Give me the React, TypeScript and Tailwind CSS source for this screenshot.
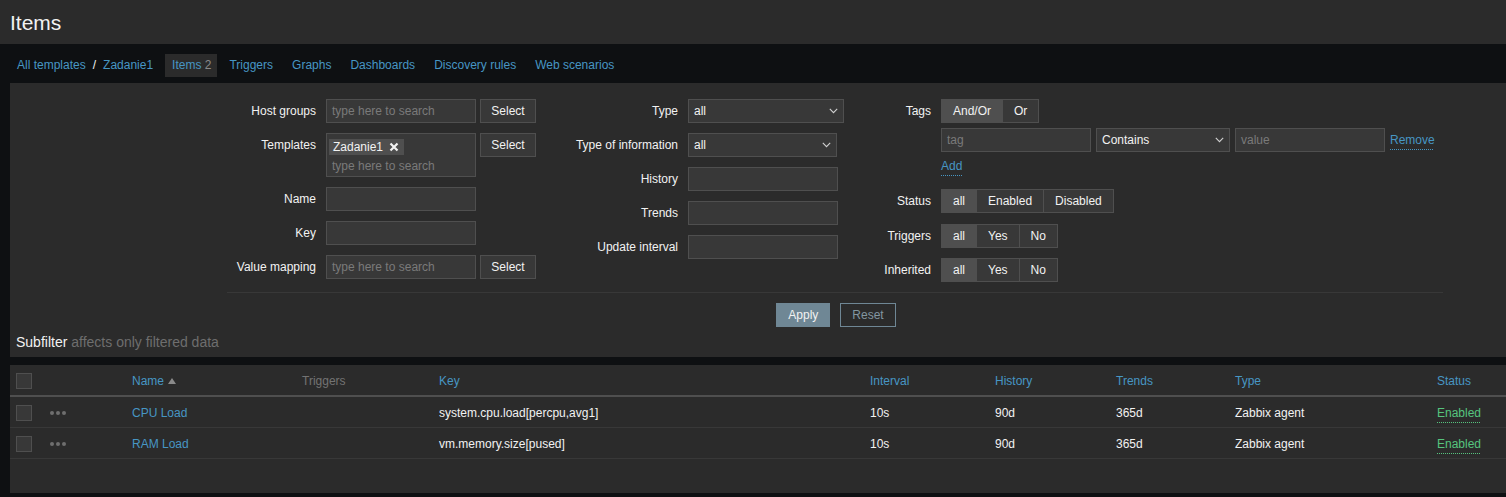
import React from "react";

function Chevron() {
  return (
    <svg width="9" height="6" viewBox="0 0 9 6" className="shrink-0">
      <path d="M0.8 0.8 L4.5 4.6 L8.2 0.8" fill="none" stroke="#d0d0d0" strokeWidth="1.1" />
    </svg>
  );
}

function Dots() {
  return (
    <svg width="18" height="6" viewBox="0 0 18 6">
      <circle cx="3" cy="3" r="2" fill="#6e6e6e" />
      <circle cx="9" cy="3" r="2" fill="#6e6e6e" />
      <circle cx="15" cy="3" r="2" fill="#6e6e6e" />
    </svg>
  );
}

function Input({ w, placeholder }: { w: string; placeholder?: string }) {
  return (
    <div className={`${w} h-[24px] bg-[#383838] border border-[#4f4f4f] px-[5px] leading-[22px] text-[#7a7a7a] whitespace-nowrap overflow-hidden`}>
      {placeholder || ""}
    </div>
  );
}

function SelectBox({ w, value }: { w: string; value: string }) {
  return (
    <div className={`${w} h-[24px] bg-[#383838] border border-[#4f4f4f] pl-[5px] pr-[5px] flex items-center justify-between text-[#f2f2f2]`}>
      <span>{value}</span>
      <Chevron />
    </div>
  );
}

function Btn({ children }: { children: React.ReactNode }) {
  return (
    <div className="w-[56px] h-[24px] bg-[#383838] border border-[#4f4f4f] flex items-center justify-center text-[#f2f2f2]">
      {children}
    </div>
  );
}

function Seg({ items }: { items: string[] }) {
  return (
    <div className="flex h-[24px]">
      {items.map((t, i) => (
        <div
          key={t}
          className={
            i === 0
              ? "flex items-center px-[11px] border border-[#4f4f4f] bg-[#4f4f4f] text-[#f2f2f2]"
              : "flex items-center px-[11px] border border-[#4f4f4f] -ml-px bg-[#383838] text-[#f2f2f2]"
          }
        >
          {t}
        </div>
      ))}
    </div>
  );
}

function Label1({ children }: { children: React.ReactNode }) {
  return <div className="w-[89px] h-[24px] leading-[24px] text-right text-[#f2f2f2] shrink-0">{children}</div>;
}
function Label2({ children }: { children: React.ReactNode }) {
  return <div className="w-[122px] h-[24px] leading-[24px] text-right text-[#f2f2f2] shrink-0">{children}</div>;
}
function Label3({ children }: { children: React.ReactNode }) {
  return <div className="w-[87px] h-[24px] leading-[24px] text-right text-[#f2f2f2] shrink-0">{children}</div>;
}

const cols =
  "grid grid-cols-[34px_83px_170px_137px_431px_125px_121px_119px_202px_1fr] items-center";

function Row({ name, keyText }: { name: string; keyText: string }) {
  return (
    <div className={`${cols} h-[31px] pt-[2px] border-b border-[#383838] text-[#f2f2f2]`}>
      <div className="pl-[6px]">
        <div className="w-[16px] h-[16px] bg-[#383838] border border-[#4f4f4f]" />
      </div>
      <div className="pl-[5px] flex items-center">
        <Dots />
      </div>
      <div className="px-[5px] text-[#4796c4]">{name}</div>
      <div className="px-[5px]" />
      <div className="px-[5px]">{keyText}</div>
      <div className="px-[5px]">10s</div>
      <div className="px-[5px]">90d</div>
      <div className="px-[5px]">365d</div>
      <div className="px-[5px]">Zabbix agent</div>
      <div className="px-[5px]">
        <span className="text-[#56c47e] underline decoration-dotted underline-offset-[5px]">Enabled</span>
      </div>
    </div>
  );
}

export default function App() {
  return (
    <div className="min-h-screen bg-[#0e1012] font-['Liberation_Sans',Arial,sans-serif] text-[12px] text-[#f2f2f2]">
      {/* Header */}
      <div className="h-[44px] bg-[#2b2b2b] flex items-center pl-[10px]">
        <h1 className="text-[21px] leading-[21px] text-[#f2f2f2]">Items</h1>
      </div>

      {/* Nav */}
      <div className="flex pt-[10px] pb-[6px] pl-[17px] h-[39px]">
        <div className="flex h-[23px] leading-[23px]">
          <span className="text-[#4796c4]">All templates</span>
          <span className="mx-[7px] text-[#f2f2f2]">/</span>
          <span className="text-[#4796c4]">Zadanie1</span>
        </div>
        <div className="flex h-[23px] leading-[23px] ml-[12px] gap-[5px]">
          <div className="pl-[7px] pr-[6px] bg-[#2b2b2b]">
            <span className="text-[#4796c4]">Items</span> <span className="text-[#8a8a8a]">2</span>
          </div>
          <div className="px-[7px] text-[#4796c4]">Triggers</div>
          <div className="px-[7px] text-[#4796c4]">Graphs</div>
          <div className="px-[7px] text-[#4796c4]">Dashboards</div>
          <div className="px-[7px] text-[#4796c4]">Discovery rules</div>
          <div className="px-[7px] text-[#4796c4]">Web scenarios</div>
        </div>
      </div>

      {/* Filter */}
      <div className="ml-[10px] bg-[#2b2b2b] pt-[16px] pb-[7px]">
        <div className="ml-[217px] w-[1216px]">
          <div className="flex">
            {/* col 1 */}
            <div className="w-[329px] flex flex-col gap-[10px]">
              <div className="flex">
                <Label1>Host groups</Label1>
                <div className="ml-[10px]">
                  <Input w="w-[150px]" placeholder="type here to search" />
                </div>
                <div className="ml-[4px]">
                  <Btn>Select</Btn>
                </div>
              </div>
              <div className="flex">
                <Label1>Templates</Label1>
                <div className="ml-[10px] w-[150px] h-[44px] bg-[#383838] border border-[#4f4f4f] flex flex-col items-start">
                  <div className="mt-[5px] ml-[2px] h-[16px] leading-[16px] bg-[#4f4f4f] pl-[4px] pr-[5px] flex items-center text-[#f2f2f2]">
                    <span>Zadanie1</span>
                    <svg width="10" height="10" viewBox="0 0 10 10" className="ml-[6px]">
                      <path d="M1.5 1.5 L8.5 8.5 M8.5 1.5 L1.5 8.5" stroke="#f2f2f2" strokeWidth="2.2" />
                    </svg>
                  </div>
                  <div className="mt-[3px] pl-[5px] leading-[16px] text-[#7a7a7a]">type here to search</div>
                </div>
                <div className="ml-[4px]">
                  <Btn>Select</Btn>
                </div>
              </div>
              <div className="flex">
                <Label1>Name</Label1>
                <div className="ml-[10px]">
                  <Input w="w-[150px]" />
                </div>
              </div>
              <div className="flex">
                <Label1>Key</Label1>
                <div className="ml-[10px]">
                  <Input w="w-[150px]" />
                </div>
              </div>
              <div className="flex">
                <Label1>Value mapping</Label1>
                <div className="ml-[10px]">
                  <Input w="w-[150px]" placeholder="type here to search" />
                </div>
                <div className="ml-[4px]">
                  <Btn>Select</Btn>
                </div>
              </div>
            </div>

            {/* col 2 */}
            <div className="w-[288px] flex flex-col gap-[10px]">
              <div className="flex">
                <Label2>Type</Label2>
                <div className="ml-[10px]">
                  <SelectBox w="w-[156px]" value="all" />
                </div>
              </div>
              <div className="flex">
                <Label2>Type of information</Label2>
                <div className="ml-[10px]">
                  <SelectBox w="w-[149px]" value="all" />
                </div>
              </div>
              <div className="flex">
                <Label2>History</Label2>
                <div className="ml-[10px]">
                  <Input w="w-[150px]" />
                </div>
              </div>
              <div className="flex">
                <Label2>Trends</Label2>
                <div className="ml-[10px]">
                  <Input w="w-[150px]" />
                </div>
              </div>
              <div className="flex">
                <Label2>Update interval</Label2>
                <div className="ml-[10px]">
                  <Input w="w-[150px]" />
                </div>
              </div>
            </div>

            {/* col 3 */}
            <div className="flex-1 flex flex-col">
              <div className="flex">
                <Label3>Tags</Label3>
                <div className="ml-[10px] flex flex-col items-start">
                  <Seg items={["And/Or", "Or"]} />
                  <div className="mt-[5px] flex items-center gap-[5px]">
                    <Input w="w-[150px]" placeholder="tag" />
                    <SelectBox w="w-[134px]" value="Contains" />
                    <Input w="w-[150px]" placeholder="value" />
                    <span className="text-[#4796c4] underline decoration-dotted underline-offset-[5px]">Remove</span>
                  </div>
                  <div className="mt-[6px] leading-[16px] text-[#4796c4] underline decoration-dotted underline-offset-[5px]">Add</div>
                </div>
              </div>
              <div className="flex mt-[15px]">
                <Label3>Status</Label3>
                <div className="ml-[10px]">
                  <Seg items={["all", "Enabled", "Disabled"]} />
                </div>
              </div>
              <div className="flex mt-[11px]">
                <Label3>Triggers</Label3>
                <div className="ml-[10px]">
                  <Seg items={["all", "Yes", "No"]} />
                </div>
              </div>
              <div className="flex mt-[10px]">
                <Label3>Inherited</Label3>
                <div className="ml-[10px]">
                  <Seg items={["all", "Yes", "No"]} />
                </div>
              </div>
            </div>
          </div>

          <div className="mt-[10px] border-t border-[#383838]" />

          <div className="mt-[10px] ml-[2px] flex justify-center gap-[10px]">
            <div className="h-[24px] px-[11px] bg-[#6f8795] border border-[#6f8795] flex items-center text-[#f2f2f2]">
              Apply
            </div>
            <div className="h-[24px] px-[11px] border border-[#6f8795] flex items-center text-[#8396a1]">
              Reset
            </div>
          </div>
        </div>

        <div className="mt-[7px] pl-[6px] text-[14px] leading-[16px]">
          <span className="text-[#f2f2f2]">Subfilter</span>{" "}
          <span className="text-[#6e6e6e]">affects only filtered data</span>
        </div>
      </div>

      {/* Table */}
      <div className="ml-[10px] mt-[8px] bg-[#2b2b2b] pb-[34px]">
        <div className={`${cols} h-[32px] pt-[2px] border-b-2 border-[#4f4f4f]`}>
          <div className="pl-[6px]">
            <div className="w-[16px] h-[16px] bg-[#383838] border border-[#4f4f4f]" />
          </div>
          <div />
          <div className="px-[5px] text-[#4796c4] flex items-center">
            Name
            <svg width="8" height="6" viewBox="0 0 8 6" className="ml-[4px]">
              <path d="M0 6 L4 0 L8 6 Z" fill="#8a8a8a" />
            </svg>
          </div>
          <div className="px-[5px] text-[#737373]">Triggers</div>
          <div className="px-[5px] text-[#4796c4]">Key</div>
          <div className="px-[5px] text-[#4796c4]">Interval</div>
          <div className="px-[5px] text-[#4796c4]">History</div>
          <div className="px-[5px] text-[#4796c4]">Trends</div>
          <div className="px-[5px] text-[#4796c4]">Type</div>
          <div className="px-[5px] text-[#4796c4]">Status</div>
        </div>
        <Row name="CPU Load" keyText="system.cpu.load[percpu,avg1]" />
        <Row name="RAM Load" keyText="vm.memory.size[pused]" />
      </div>
    </div>
  );
}
